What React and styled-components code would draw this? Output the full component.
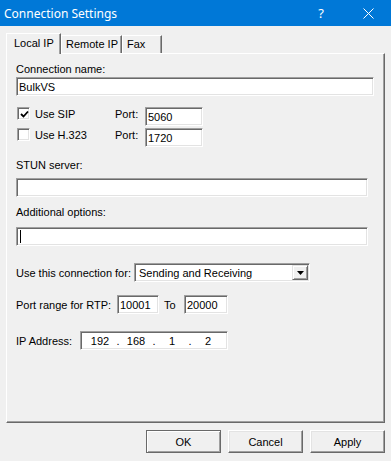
import React from 'react'
import styled, { createGlobalStyle } from 'styled-components';

const GlobalStyle = createGlobalStyle`
  html, body {
    margin: 0;
    padding: 0;
    background: #f0f0f0;
  }
  * {
    box-sizing: border-box;
  }
`;

function App() {
  return (
    <Window>
      <GlobalStyle />
      <TitleBar>
        <Title>Connection Settings</Title>
        <TitleButtons>
          <Help>?</Help>
          <CloseIcon width="11" height="11" viewBox="0 0 11 11">
            <path d="M0.5 0.5 L10.5 10.5 M10.5 0.5 L0.5 10.5" stroke="#fff" strokeWidth="1" fill="none" />
          </CloseIcon>
        </TitleButtons>
      </TitleBar>

      <Body>
        <TabStrip>
          <Tab active>Local IP</Tab>
          <Tab width={61}>Remote IP</Tab>
          <Tab width={40}>Fax</Tab>
        </TabStrip>

        <Panel>
          <Label>Connection name:</Label>
          <Input width={358} top={1} value="BulkVS" readOnly />

          <CheckRow top={11}>
            <CheckBox checked />
            <CheckLabel>Use SIP</CheckLabel>
            <PortLabel>Port:</PortLabel>
            <Input width={58} value="5060" readOnly />
          </CheckRow>
          <CheckRow top={2}>
            <CheckBox />
            <CheckLabel>Use H.323</CheckLabel>
            <PortLabel>Port:</PortLabel>
            <Input width={58} value="1720" readOnly />
          </CheckRow>

          <Label top={12}>STUN server:</Label>
          <Input width={352} top={6} value="" readOnly />

          <Label top={9}>Additional options:</Label>
          <Input width={352} top={8} value="" readOnly caret />

          <Row top={17}>
            <RowLabel width={118}>Use this connection for:</RowLabel>
            <Select>
              <SelectText>Sending and Receiving</SelectText>
              <DropButton>
                <svg width="7" height="4" viewBox="0 0 7 4">
                  <path d="M0 0 H7 L3.5 4 Z" fill="#000" />
                </svg>
              </DropButton>
            </Select>
          </Row>

          <Row top={13}>
            <RowLabel width={101}>Port range for RTP:</RowLabel>
            <Input width={42} value="10001" readOnly />
            <ToLabel>To</ToLabel>
            <Input width={44} value="20000" readOnly />
          </Row>

          <Row top={17}>
            <RowLabel width={64}>IP Address:</RowLabel>
            <IpField>
              <Octet>192</Octet><Dot>.</Dot>
              <Octet>168</Octet><Dot>.</Dot>
              <Octet>1</Octet><Dot>.</Dot>
              <Octet>2</Octet>
            </IpField>
          </Row>
        </Panel>

        <ButtonRow>
          <Button isDefault>OK</Button>
          <Button>Cancel</Button>
          <Button>Apply</Button>
        </ButtonRow>
      </Body>
    </Window>
  )
}

function CheckBox({ checked }) {
  return (
    <Box>
      {checked &&
        <svg width="9" height="9" viewBox="0 0 9 9">
          <path d="M1 4 L3.5 6.5 L8 1.5" stroke="#000" strokeWidth="1.8" fill="none" />
        </svg>}
    </Box>
  )
}

export default App

const Window = styled.div`
  width: 391px;
  height: 461px;
  background: #f0f0f0;
  font-family: "Liberation Sans", Arial, sans-serif;
  font-size: 11px;
  color: #000;
  overflow: hidden;
`;

const TitleBar = styled.div`
  height: 26px;
  background: #0078d7;
  display: flex;
  align-items: center;
  justify-content: space-between;
  padding: 0 17px 0 4px;
`;

const Title = styled.span`
  font-family: "Noto Sans", "Liberation Sans", sans-serif;
  font-size: 12px;
  color: #fff;
  margin-top: 1px;
`;

const TitleButtons = styled.div`
  display: flex;
  align-items: center;
  gap: 39px;
`;

const Help = styled.span`
  font-family: "Noto Sans", sans-serif;
  font-size: 13px;
  color: #fff;
`;

const CloseIcon = styled.svg`
  display: block;
`;

const Body = styled.div`
  padding: 7px 6px 0 6px;
`;

const TabStrip = styled.div`
  display: flex;
  align-items: flex-end;
  height: 20px;
  position: relative;
  z-index: 1;
`;

const Tab = styled.div`
  width: ${p => p.active ? 55 : p.width}px;
  height: ${p => p.active ? 21 : 18}px;
  margin-bottom: ${p => p.active ? -1 : 0}px;
  padding: ${p => p.active ? '3px 0 0 7px' : '2px 0 0 4px'};
  background: #f0f0f0;
  border-top: 1px solid #fff;
  border-left: 1px solid #fff;
  border-right: 1px solid #696969;
  box-shadow: inset -1px 0 #a0a0a0;
  white-space: nowrap;
`;

const Panel = styled.div`
  width: 379px;
  height: 370px;
  border-top: 1px solid #fff;
  border-left: 1px solid #fff;
  border-right: 1px solid #696969;
  border-bottom: 1px solid #696969;
  box-shadow: inset -1px -1px #a0a0a0;
  padding: 9px 0 0 9px;
  display: flex;
  flex-direction: column;
  align-items: flex-start;
`;

const Label = styled.div`
  height: 13px;
  line-height: 13px;
  margin-top: ${p => p.top || 0}px;
`;

const Input = styled.input`
  width: ${p => p.width}px;
  height: 19px;
  margin: ${p => p.top || 0}px 0 0 0;
  padding: 1px 2px 0 2px;
  background: #fff;
  border: 1px solid;
  border-color: #a0a0a0 #fff #fff #a0a0a0;
  box-shadow: inset 1px 1px #696969, inset -1px -1px #e3e3e3;
  font-family: "Liberation Sans", Arial, sans-serif;
  font-size: 11px;
  color: #000;
  outline: none;
  ${p => p.caret && `
    background-image: linear-gradient(#000, #000);
    background-size: 1px 13px;
    background-position: 3px 2px;
    background-repeat: no-repeat;
  `}
`;

const Row = styled.div`
  display: flex;
  align-items: center;
  height: 19px;
  margin-top: ${p => p.top || 0}px;
`;

const CheckRow = styled.div`
  display: flex;
  align-items: flex-start;
  height: 19px;
  margin-top: ${p => p.top || 0}px;
  padding-left: 1px;
`;

const Box = styled.div`
  width: 13px;
  height: 13px;
  background: #fff;
  border: 1px solid;
  border-color: #a0a0a0 #fff #fff #a0a0a0;
  box-shadow: inset 1px 1px #696969, inset -1px -1px #e3e3e3;
  display: flex;
  align-items: center;
  justify-content: center;
  padding: 1px 0 0 1px;
`;

const CheckLabel = styled.span`
  width: 85px;
  padding-left: 5px;
  line-height: 13px;
  margin-top: 1px;
`;

const PortLabel = styled.span`
  width: 30px;
  line-height: 13px;
  margin-top: 1px;
`;

const RowLabel = styled.span`
  width: ${p => p.width}px;
  flex: none;
`;

const ToLabel = styled.span`
  width: 25px;
  padding-left: 5px;
`;

const Select = styled.div`
  width: 176px;
  height: 19px;
  background: #fff;
  border: 1px solid;
  border-color: #a0a0a0 #fff #fff #a0a0a0;
  box-shadow: inset 1px 1px #696969, inset -1px -1px #e3e3e3;
  display: flex;
  align-items: stretch;
  padding: 1px;
`;

const SelectText = styled.span`
  flex: 1;
  padding: 2px 0 0 3px;
`;

const DropButton = styled.div`
  width: 16px;
  background: #f0f0f0;
  border-top: 1px solid #e3e3e3;
  border-left: 1px solid #e3e3e3;
  border-right: 1px solid #696969;
  border-bottom: 1px solid #696969;
  box-shadow: inset 1px 1px #fff, inset -1px -1px #a0a0a0;
  display: flex;
  align-items: center;
  justify-content: center;
  padding-top: 1px;
`;

const IpField = styled.div`
  width: 148px;
  height: 19px;
  background: #fff;
  border: 1px solid;
  border-color: #a0a0a0 #fff #fff #a0a0a0;
  box-shadow: inset 1px 1px #696969, inset -1px -1px #e3e3e3;
  display: flex;
  align-items: center;
  padding: 0 0 0 5px;
`;

const Octet = styled.span`
  width: 28px;
  text-align: center;
`;

const Dot = styled.span`
  width: 8px;
  text-align: center;
`;

const ButtonRow = styled.div`
  display: flex;
  justify-content: flex-end;
  gap: 7px;
  margin-top: 7px;
`;

const Button = styled.button`
  width: 75px;
  height: 23px;
  background: #f0f0f0;
  font-family: "Liberation Sans", Arial, sans-serif;
  font-size: 11px;
  color: #000;
  padding: 0;
  border: 1px solid;
  border-color: ${p => p.isDefault ? '#696969' : '#fff'} #696969 #696969 ${p => p.isDefault ? '#696969' : '#fff'};
  box-shadow: ${p => p.isDefault
    ? 'inset 1px 1px #fff, inset -1px -1px #a0a0a0'
    : 'inset -1px -1px #a0a0a0, inset 1px 1px #e3e3e3'};
`;
